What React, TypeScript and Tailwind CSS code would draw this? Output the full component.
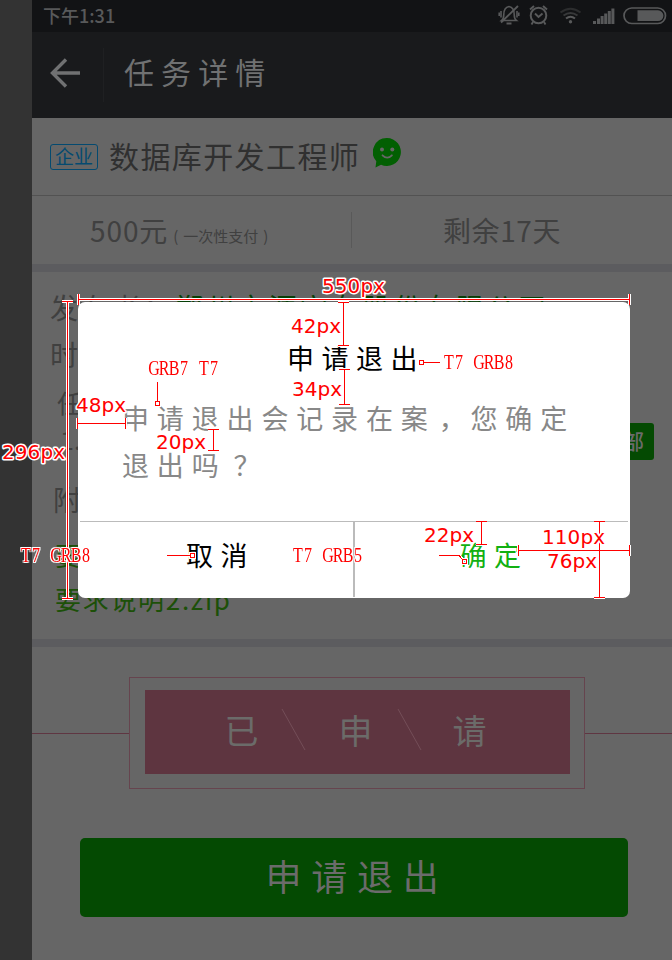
import React from "react";

const CJK = "font-['Noto_Sans_CJK_SC',sans-serif]";

function StatusIcons() {
  return (
    <svg width="170" height="32" viewBox="498 0 170 32" fill="none" stroke="#58595a" strokeWidth="1.6">
      <path d="M501.500 20.500c2-1.600 2.300-3 2.300-6 0-4.500 1.700-7.300 5.200-8 3.500.7 5.200 3.500 5.200 8 0 3 .3 4.400 2.300 6z" />
      <path d="M506.500 23.500h5" strokeWidth="2" />
      <path d="M518 6L501 22.500" strokeWidth="1.900" />
      <path d="M501 11v6.500M499.200 12.500v3.500M517 11v6.500M518.800 12.500v3.500" />
      <circle cx="538.500" cy="15.500" r="7.800" strokeWidth="2" />
      <path d="M535 13.500l3.500 3.500 4-3.500M530 9.500l4-3.500M547 9.500l-4-3.500M533 22l-1.500 2.500M544 22l1.500 2.500" strokeWidth="1.900" />
      <path d="M560.500 12.500q10-7.500 20 0" stroke="#2c2d2e" strokeWidth="2" />
      <path d="M563.500 15.500q7-5 14 0" stroke="#38393a" strokeWidth="2" />
      <path d="M566 18.500q4.500-3.500 9 0" strokeWidth="2" />
      <circle cx="570.500" cy="21.700" r="1.700" fill="#58595a" stroke="none" />
      <g fill="#58595a" stroke="none">
        <rect x="593" y="21" width="3" height="3" />
        <rect x="597" y="18.500" width="3" height="5.500" />
        <rect x="600.600" y="16" width="3" height="8" />
        <rect x="604.200" y="13.500" width="3" height="10.500" />
        <rect x="607.800" y="11" width="3" height="13" />
        <rect x="611.400" y="8.500" width="3" height="15.500" />
      </g>
      <rect x="624" y="8" width="41.500" height="15.500" rx="7.700" strokeWidth="1.700" />
      <path d="M637.500 10.300H658a5.400 5.400 0 0 1 0 10.800h-20.500z" fill="#58595a" stroke="none" />
    </svg>
  );
}

function ChatSmile() {
  return (
    <svg width="28" height="30" viewBox="0 0 28 30" className="-mt-[8px] ml-[13px]">
      <path d="M14 0a14 14 0 1 1-6 26.700L2.500 29.500l.8-6.300A14 14 0 0 1 14 0z" fill="#025f02" />
      <circle cx="9" cy="11.500" r="2" fill="#666" />
      <circle cx="19.300" cy="11.500" r="2" fill="#666" />
      <path d="M9.500 17.300q4.700 4.800 9.400 0" stroke="#666" strokeWidth="1.800" fill="none" strokeLinecap="round" />
    </svg>
  );
}

function Page() {
  return (
    <div className="flex h-[960px] w-[672px] bg-[#333]">
      <div className="w-8 shrink-0" />
      <div className="flex w-[640px] flex-col bg-[#666]">
        <div className="flex h-8 items-center justify-between bg-[#121315] pl-[11px] pr-1">
          <span className="pb-px text-[18px] font-medium leading-[31px] text-[#58595a]">下午1:31</span>
          <StatusIcons />
        </div>
        <header className="flex h-[86px] items-center bg-[#191a1c]">
          <svg width="31" height="30" viewBox="0 0 31 30" className="-mt-[5px] ml-[18px] shrink-0" fill="none" stroke="#707172" strokeWidth="3.400">
            <path d="M30 15H2.500M16 1.500L2.500 15 16 28.500" />
          </svg>
          <div className="ml-[22px] h-[54px] w-px bg-[#1f2022]" />
          <h1 className="ml-5 pb-[8px] text-[30px] leading-10 tracking-[7.100px] text-[#707172]">任务详情</h1>
        </header>
        <div className="flex h-[78px] shrink-0 items-center border-b border-[#525252] pl-[18px]">
          <span className="flex h-[26px] w-12 items-center justify-center rounded-[3px] border-[1.500px] border-[#044a70] pb-[3px] text-[19px] leading-none text-[#044a70]">
            企业
          </span>
          <h2 className="ml-[11px] pb-[3px] text-[30px] leading-10 tracking-[1.400px] text-[#303030]">数据库开发工程师</h2>
          <ChatSmile />
        </div>
        <div className="flex h-[68px] shrink-0 items-center text-[28px] text-[#404040]">
          <div className="flex w-[319px] items-baseline pl-[58px]">
            <span className="tracking-[0.9px]">500元</span>
            <span className="ml-[5px] text-[15px]">
              (<span className="mx-[5px]">一次性支付</span>)
            </span>
          </div>
          <div className="h-9 w-px bg-[#595959]" />
          <span className="ml-[91px] tracking-[0.6px]">剩余17天</span>
        </div>
        <div className="h-2 shrink-0 bg-[#5c5c5f]" />
        <section className="flex h-[367px] shrink-0 flex-col pl-[18px] text-[28px] leading-[46px] text-[#404040]">
          <div className="mt-[12px] flex h-[47px] tracking-[3.200px]">
            <span className="w-[125px]">发布者：</span>
            <span className="text-[#063f06]">郑州市源宇有股份有限公司</span>
          </div>
          <div className="h-[48px]">时</div>
          <div className="h-[42px] pl-[7px] text-[25px]">任</div>
          <div className="-mt-1 flex h-[46px] items-center justify-between pl-[10px] pr-[18px] text-[25px]">
            <span className="pb-0.5">1.</span>
            <span className="mt-0.5 flex h-[37px] w-[110px] items-center justify-end rounded-[3px] bg-[#044a02] pb-0.5 pr-[10px] text-[21px] font-medium leading-none text-[#6b6b6b]">
              部
            </span>
          </div>
          <div className="mt-[13px] h-[56px] pl-[3px]">附</div>
          <div className="h-[44px] pl-[5px] text-[26px] text-[#1c5008]">要</div>
          <div className="pl-[5px] text-[26px] tracking-[1.700px] text-[#1c5008]">要求说明2.zip</div>
        </section>
        <div className="h-2 shrink-0 bg-[#5c5c5f]" />
        <section className="flex h-[170px] shrink-0 items-center pt-[2px]">
          <div className="h-px w-[97px] bg-[#5f3642]" />
          <div className="h-[112px] w-[456px] border border-[#66444e] px-[15px] py-3">
            <div className="flex h-[84px] w-[425px] items-center justify-center bg-[#5e3540] pr-[4px] text-[34px] leading-none text-[#6b6b69]">
              <span className="w-[34px] pb-[5px]">已</span>
              <svg width="80" height="84" className="shrink-0" stroke="#744e58" strokeWidth="1">
                <path d="M23 19L46 60" />
              </svg>
              <span className="w-[34px] pb-[5px]">申</span>
              <svg width="80" height="84" className="shrink-0" stroke="#744e58" strokeWidth="1">
                <path d="M25 19L48 60" />
              </svg>
              <span className="w-[34px] pb-[5px]">请</span>
            </div>
          </div>
          <div className="h-px flex-1 bg-[#5f3642]" />
        </section>
        <button className="ml-12 mt-[21px] flex h-[79px] w-[548px] items-center justify-center rounded-[5px] bg-[#044a02] pb-[5px] pl-[6px] text-[36px] tracking-[9.800px] text-[#6b6b6b]">
          申请退出
        </button>
      </div>
    </div>
  );
}

function Dialog() {
  return (
    <div className="absolute left-[78px] top-[302px] flex h-[296px] w-[552px] flex-col rounded-[7px] bg-white">
      <div className="h-[219px] pl-[44px] pt-[34px]">
        <h3 className="pl-[165px] text-[27px] leading-[43px] tracking-[7.500px] text-black">申请退出</h3>
        <p className="mt-[15px] text-[27px] leading-[47px] tracking-[7.850px] text-[#888]">
          申请退出会记录在案<span className="-mr-[3px] ml-[3px]">，</span>您确定
          <br />
          退出吗<span className="ml-[7px]">？</span>
        </p>
      </div>
      <div className="mx-0.5 flex flex-1 border-t border-[#bbb] text-[27px] tracking-[7.500px]">
        <div className="flex h-[75px] w-[273px] items-center justify-center pb-[8px] pl-[8px] text-black">取消</div>
        <div className="h-[75px] w-0.5 bg-[#bbb]" />
        <div className="flex h-[75px] flex-1 items-center justify-center pb-[8px] pl-[5px] text-[#12b012]">确定</div>
      </div>
    </div>
  );
}

const DIM_LINES =
  "M78 299.5H630M78.500 294V305M629.500 294V305" +
  "M67.500 301V599M62 301.500H73M62 598.500H73" +
  "M343.500 302V346M338 302.500H349M338 345.500H349" +
  "M344.500 369V405M339 369.500H350M339 404.500H350" +
  "M77 423.500H126M77.500 418V429M125.500 418V429" +
  "M213.500 429V451M208 429.500H219M208 450.500H219" +
  "M481.500 521V545M476 521.500H487M476 544.500H487" +
  "M599.500 521V598M594 521.500H605M594 597.500H605" +
  "M518 550.500H630M518.500 545V556M629.500 545V556";

const LEADERS =
  "M157.500 382V401M155.500 401.500h4v4h-4z" +
  "M424 362.500H440M419.500 360.500h4v4h-4z" +
  "M167 555.500H190M190.500 553.500h4v4h-4z" +
  "M439 555.500H459L462 559M462.500 559.500h4v4h-4z";

const SIZES: [string, number, number, number][] = [
  ["550px", 322, 293, 63],
  ["42px", 291, 333, 50],
  ["34px", 292, 396, 50],
  ["48px", 76, 412, 50],
  ["20px", 156, 449, 50],
  ["296px", 2, 459, 63],
  ["22px", 424, 542, 50],
  ["110px", 542, 544, 63],
  ["76px", 547, 568, 50],
];

const STYLES: [string, number, number][] = [
  ["GRB7 T7", 149, 375],
  ["T7 GRB8", 444, 369],
  ["T7 GRB8", 21, 562],
  ["T7 GRB5", 293, 562],
];

// Character centres of a seven-cell label, in the horizontally condensed space.
const CELLS = "6.25 18.75 31.25 43.75 56.25 68.75 81.25";

function Annotations() {
  return (
    <svg width="672" height="960" viewBox="0 0 672 960" className="absolute left-0 top-0">
      <defs>
        <filter id="halo" x="-5%" y="-20%" width="110%" height="140%" colorInterpolationFilters="sRGB">
          <feMorphology in="SourceAlpha" operator="dilate" radius="1" result="grown" />
          <feFlood floodColor="#fff" />
          <feComposite in2="grown" operator="in" result="edge" />
          <feMerge>
            <feMergeNode in="edge" />
            <feMergeNode in="SourceGraphic" />
          </feMerge>
        </filter>
      </defs>
      <g fill="none" shapeRendering="crispEdges">
        <path d={DIM_LINES} stroke="#fff" strokeWidth="3" />
        <path d={LEADERS} stroke="#fff" strokeWidth="3" />
        <path d={DIM_LINES} stroke="#f00" />
        <path d={LEADERS} stroke="#f00" />
      </g>
      <g fill="#f00" stroke="#fff" strokeWidth="3" strokeLinejoin="round" className="[paint-order:stroke]">
        {SIZES.map(([t, x, y, w]) => (
          <text key={t} x={x} y={y} textLength={w} className="font-['DejaVu_Sans',sans-serif] text-[20px]">
            {t}
          </text>
        ))}
      </g>
      <g fill="#f00" filter="url(#halo)" textAnchor="middle">
        {STYLES.map(([t, x, y]) => (
          <text
            key={`${x}-${y}`}
            x={CELLS}
            y={0}
            transform={`translate(${x} ${y}) scale(0.8 1)`}
            className="whitespace-pre font-['Liberation_Serif',serif] text-[20px]"
          >
            {t}
          </text>
        ))}
      </g>
    </svg>
  );
}

export default function App() {
  return (
    <div className={`relative h-[960px] w-[672px] overflow-hidden whitespace-nowrap ${CJK}`}>
      <Page />
      <Dialog />
      <Annotations />
    </div>
  );
}
